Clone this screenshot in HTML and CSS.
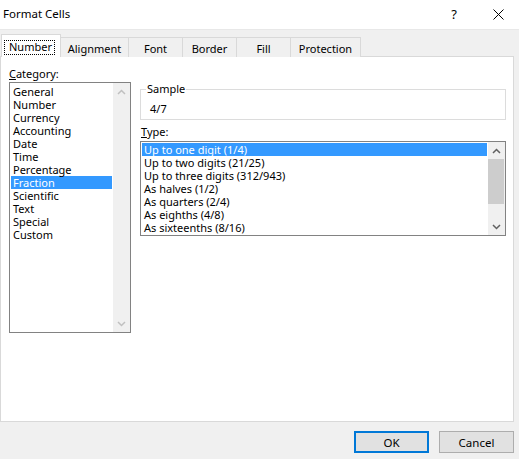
FILE: index.html
```html
<!DOCTYPE html>
<html>
<head>
<meta charset="utf-8">
<link rel="stylesheet" href="styles.css">
</head>
<body>
<div class="dialog">
  <header class="titlebar">
    <span class="title">Format Cells</span>
    <span class="help">?</span>
    <span class="close"><svg width="11" height="11" viewBox="0 0 11 11"><path d="M0.5 0.5 L10.5 10.5 M10.5 0.5 L0.5 10.5" stroke="#000" stroke-width="1" fill="none"/></svg></span>
  </header>
  <nav class="tabs">
    <div class="tab active"><span class="focus">Number</span></div>
    <div class="tab t-align">Alignment</div>
    <div class="tab t-font">Font</div>
    <div class="tab t-border">Border</div>
    <div class="tab t-fill">Fill</div>
    <div class="tab t-prot">Protection</div>
  </nav>
  <section class="panel">
    <div class="col-cat">
      <div class="lbl cat-lbl"><u>C</u>ategory:</div>
      <div class="listbox cat-list">
        <ul class="items">
          <li>General</li>
          <li>Number</li>
          <li>Currency</li>
          <li>Accounting</li>
          <li>Date</li>
          <li>Time</li>
          <li>Percentage</li>
          <li class="sel">Fraction</li>
          <li>Scientific</li>
          <li>Text</li>
          <li>Special</li>
          <li>Custom</li>
        </ul>
        <div class="scroll disabled">
          <div class="sbtn"><svg width="9" height="6" viewBox="0 0 9 6"><polyline points="1,5 4.5,1.5 8,5" fill="none" stroke="currentColor" stroke-width="1.5"/></svg></div>
          <div class="track"></div>
          <div class="sbtn"><svg width="9" height="6" viewBox="0 0 9 6"><polyline points="1,1 4.5,4.5 8,1" fill="none" stroke="currentColor" stroke-width="1.5"/></svg></div>
        </div>
      </div>
    </div>
    <div class="col-right">
      <div class="group">
        <span class="legend">Sample</span>
        <div class="sample-val">4/7</div>
      </div>
      <div class="lbl type-lbl"><u>T</u>ype:</div>
      <div class="listbox type-list">
        <ul class="items">
          <li class="sel">Up to one digit (1/4)</li>
          <li>Up to two digits (21/25)</li>
          <li>Up to three digits (312/943)</li>
          <li>As halves (1/2)</li>
          <li>As quarters (2/4)</li>
          <li>As eighths (4/8)</li>
          <li>As sixteenths (8/16)</li>
        </ul>
        <div class="scroll">
          <div class="sbtn"><svg width="9" height="6" viewBox="0 0 9 6"><polyline points="1,5 4.5,1.5 8,5" fill="none" stroke="currentColor" stroke-width="1.5"/></svg></div>
          <div class="track"><div class="thumb"></div></div>
          <div class="sbtn"><svg width="9" height="6" viewBox="0 0 9 6"><polyline points="1,1 4.5,4.5 8,1" fill="none" stroke="currentColor" stroke-width="1.5"/></svg></div>
        </div>
      </div>
    </div>
  </section>
  <footer class="buttons">
    <button class="btn default">OK</button>
    <button class="btn">Cancel</button>
  </footer>
</div>
</body>
</html>
```
FILE: styles.css
```css
* { box-sizing: border-box; }
html, body { margin: 0; padding: 0; }
body {
  background: #f0f0f0;
  font-family: "Noto Sans", "Open Sans", sans-serif;
  font-size: 11px;
  color: #000;
  width: 519px;
  height: 459px;
  overflow: hidden;
}
.dialog { display: flex; flex-direction: column; }

.titlebar {
  height: 30px;
  background: #fff;
  display: flex;
  align-items: center;
  border-bottom: 1px solid #e8e8e8;
}
.title { padding-left: 3px; font-size: 11.5px; margin-top: -2px; }
.help { margin-left: auto; font-size: 13px; margin-right: 36px; margin-top: -2px; }
.close { display: flex; margin-right: 15px; margin-top: -1px; }

.tabs {
  display: flex;
  align-items: flex-end;
  height: 27px;
  padding-left: 1px;
  margin-bottom: -1px;
  position: relative;
  z-index: 1;
}
.tab {
  height: 20px;
  border: 1px solid #d9d9d9;
  border-bottom: none;
  border-left: none;
  display: flex;
  align-items: center;
  justify-content: center;
  background: #f0f0f0;
  padding-top: 1px;
}
.tab.active {
  height: 23px;
  width: 60px;
  background: #fff;
  border-left: 1px solid #d9d9d9;
  justify-content: flex-start;
  padding-left: 2px;
  padding-top: 2px;
}
.focus {
  border: 1px dotted #000;
  height: 15px;
  width: 51px;
  display: flex;
  align-items: center;
  padding-left: 4px;
  padding-bottom: 1px;
}
.t-align { width: 68px; }
.t-font { width: 54px; }
.t-border { width: 54px; }
.t-fill { width: 54px; }
.t-prot { width: 70px; }

.panel {
  width: 514px;
  height: 366px;
  background: #fff;
  border: 1px solid #d9d9d9;
  display: flex;
  padding-left: 8px;
  padding-top: 8px;
  gap: 9px;
}
.col-cat { width: 122px; display: flex; flex-direction: column; }
.col-right { width: 366px; display: flex; flex-direction: column; padding-top: 24px; }

.lbl { line-height: 17px; height: 17px; }
.type-lbl { margin-top: 3px; margin-bottom: 1px; padding-left: 1px; }

.listbox {
  border: 1px solid #828282;
  display: flex;
  background: #fff;
}
.cat-list { height: 251px; }
.type-list { height: 95px; }
.items {
  list-style: none;
  margin: 0;
  padding: 2px 1px 0 1px;
  flex: 1;
}
.type-list .items { padding-top: 1px; }
.items li {
  height: 13px;
  line-height: 13px;
  padding-left: 2px;
  white-space: nowrap;
}
.items li.sel { background: #3399ff; color: #fff; }

.scroll {
  width: 17px;
  background: #f0f0f0;
  display: flex;
  flex-direction: column;
  color: #606060;
}
.scroll.disabled { color: #c0c0c0; }
.sbtn { height: 17px; display: flex; align-items: center; justify-content: center; }
.track { flex: 1; }
.thumb { height: 45px; background: #cdcdcd; margin: 0 1px 0 0; }

.group {
  position: relative;
  border: 1px solid #dcdcdc;
  height: 31px;
  padding: 11px 0 0 9px;
}
.legend {
  position: absolute;
  top: -9px;
  left: 5px;
  background: #fff;
  padding: 0 1px;
  line-height: 16px;
}
.sample-val { line-height: 16px; }

.buttons {
  display: flex;
  justify-content: flex-end;
  gap: 10px;
  padding: 9px 5px 0 0;
}
.btn {
  width: 75px;
  height: 22px;
  background: #e1e1e1;
  border: 1px solid #adadad;
  font-family: inherit;
  font-size: 11.5px;
  color: #000;
  padding: 0;
}
.btn.default { border: 2px solid #0078d7; }
```
